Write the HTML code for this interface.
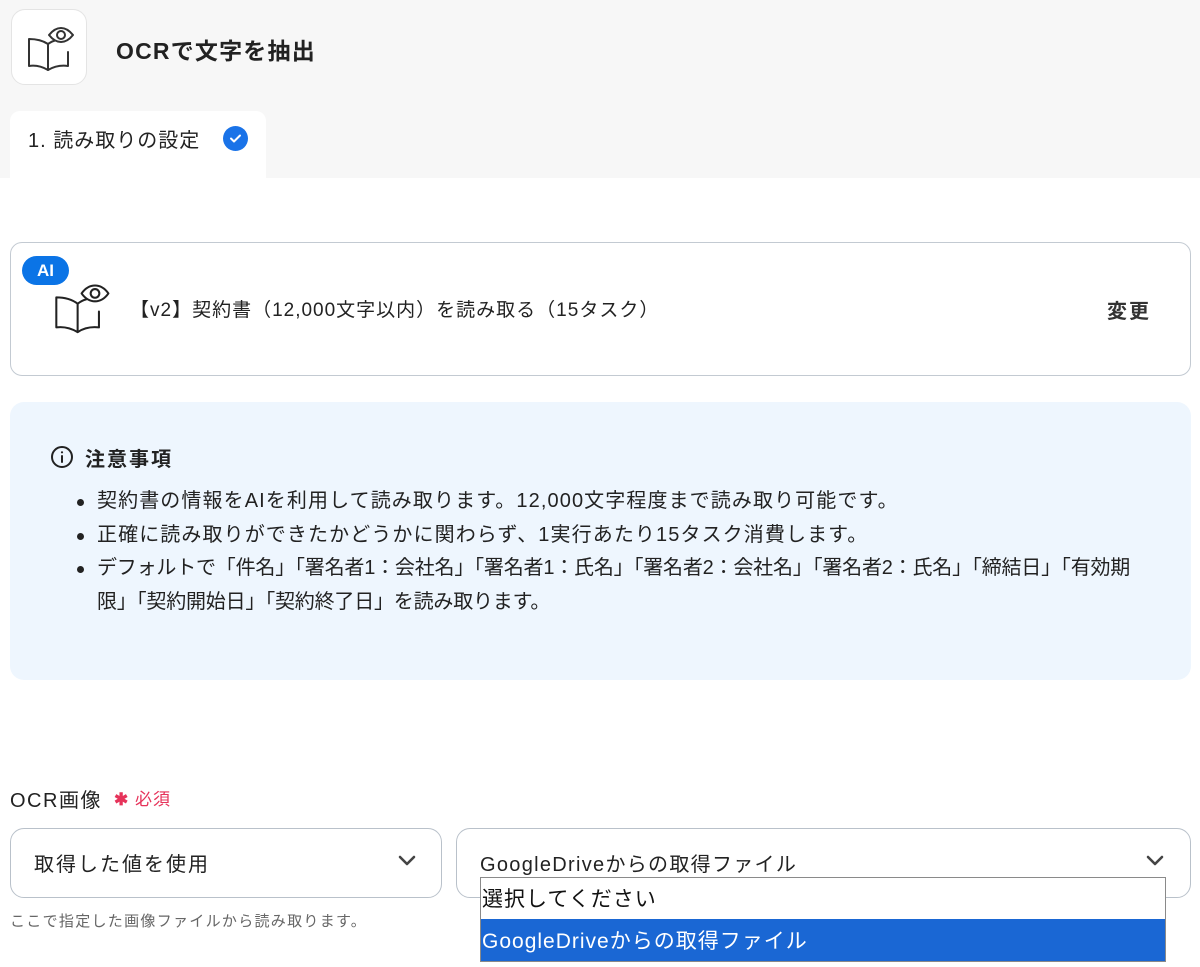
<!DOCTYPE html>
<html><head><meta charset="utf-8"><style>
*{box-sizing:border-box;margin:0;padding:0}
body{width:1200px;height:967px;background:#fff;font-family:"Liberation Sans","Noto Sans CJK JP",sans-serif;color:#222;position:relative;overflow:hidden}
.abs{position:absolute;white-space:nowrap}
.hdr{left:0;top:0;width:1200px;height:178px;background:#f7f7f7}
.ibox{left:11px;top:9px;width:76px;height:76px;background:#fff;border:1px solid #e4e4e4;border-radius:14px}
.title{left:116px;top:32px;font-size:23px;font-weight:bold;color:#222;letter-spacing:1.2px}
.tab{left:10px;top:111px;width:256px;height:67px;background:#fff;border-radius:10px 10px 0 0}
.tabt{left:28px;top:124px;font-size:20px;color:#222;letter-spacing:1px}
.chk{left:223px;top:126px;width:25px;height:25px;border-radius:50%;background:#1a73e8}
.card{left:10px;top:242px;width:1181px;height:134px;border:1px solid #c3cad2;border-radius:12px}
.ai{left:22px;top:256px;width:47px;height:29px;border-radius:15px;background:#0b74e6;color:#fff;font-weight:bold;font-size:17px;text-align:center;line-height:29px}
.ctext{left:130px;top:295px;font-size:19px;letter-spacing:1px}
.chg{left:1107px;top:295px;font-size:20px;font-weight:bold;color:#333;letter-spacing:2px}
.note{left:10px;top:402px;width:1181px;height:278px;background:#eef6fe;border-radius:14px}
.nh{left:85px;top:443px;font-size:20px;font-weight:bold;color:#222;letter-spacing:2px}
ul{position:absolute;left:97px;top:485px;width:1090px;font-size:20px;line-height:33.5px;list-style:none;letter-spacing:1.1px;white-space:nowrap}
li{position:relative}
li:before{content:"";position:absolute;left:-20px;top:14px;width:7px;height:7px;border-radius:50%;background:#222}
.lbl{left:10px;top:784px;font-size:20px;color:#222;letter-spacing:1.5px}
.req{left:114px;top:785px;font-size:17px;color:#e6335a;letter-spacing:1px}
.sel{top:828px;height:70px;border:1px solid #b9c1ca;border-radius:14px;background:#fff}
.st{font-size:20px;top:848px}
.help{left:10px;top:910px;font-size:15px;color:#666;letter-spacing:1.3px}
.dd{left:480px;top:877px;width:686px;height:85px;border:1px solid #8a8a8a;background:#fff}
.o1{left:481px;top:878px;width:684px;height:41px;font-size:21px;line-height:44px;padding-left:1px;color:#111;letter-spacing:1px}
.o2{left:481px;top:919px;width:684px;height:42px;background:#1a67d4;color:#fff;font-size:21px;line-height:46px;padding-left:1px;letter-spacing:1px}
</style></head><body>
<div class="abs hdr"></div>
<div class="abs ibox"><svg width="76" height="76" viewBox="0 0 76 76" style="position:absolute;left:-1px;top:-1px" fill="none" stroke="#333" stroke-width="2" stroke-linejoin="round" stroke-linecap="round">
<path d="M18 30v27c6-1 12 0 19 4V35c-6-4-12-5-19-5z"/><path d="M37 61c7-4 13-5 20-4V43"/><path d="M37 35c3-2 5-3 7-3.5"/>
<path d="M38 26c4-5 8-7 12-7s8 2 12 7c-4 5-8 7-12 7s-8-2-12-7z"/><circle cx="50" cy="26" r="4"/></svg></div>
<div class="abs title">OCRで文字を抽出</div>
<div class="abs tab"></div>
<div class="abs tabt">1. 読み取りの設定</div>
<div class="abs chk"><svg width="25" height="25" viewBox="0 0 25 25"><path d="M8 12.5l3 3 6-6" fill="none" stroke="#fff" stroke-width="2" stroke-linecap="round" stroke-linejoin="round"/></svg></div>

<div class="abs card"></div>
<div class="abs ai">AI</div>
<svg class="abs" style="left:50px;top:280px" width="60" height="60" viewBox="0 0 76 76" fill="none" stroke="#222" stroke-width="2.6" stroke-linejoin="round" stroke-linecap="round">
<path d="M8 22v38c8-1 17 0 27 6V30c-8-6-17-8-27-8z"/><path d="M35 66c9-6 18-7 27-6V40"/><path d="M35 30c4-3 8-5 11-5.5"/>
<path d="M40 17c5-7 11-10 17-10s12 3 17 10c-5 7-11 10-17 10s-12-3-17-10z"/><circle cx="57" cy="17" r="5.5"/></svg>
<div class="abs ctext">【v2】契約書（12,000文字以内）を読み取る（15タスク）</div>
<div class="abs chg">変更</div>

<div class="abs note"></div>
<svg class="abs" style="left:50px;top:445px" width="24" height="24" viewBox="0 0 24 24" fill="none" stroke="#222" stroke-width="2"><circle cx="12" cy="12" r="10"/><path d="M12 11v6" stroke-linecap="round"/><circle cx="12" cy="7.3" r="1.1" fill="#222" stroke="none"/></svg>
<div class="abs nh">注意事項</div>
<ul>
<li>契約書の情報をAIを利用して読み取ります。12,000文字程度まで読み取り可能です。</li>
<li>正確に読み取りができたかどうかに関わらず、1実行あたり15タスク消費します。</li>
<li style="letter-spacing:-0.2px">デフォルトで「件名」「署名者1：会社名」「署名者1：氏名」「署名者2：会社名」「署名者2：氏名」「締結日」「有効期<br>限」「契約開始日」「契約終了日」を読み取ります。</li>
</ul>

<div class="abs lbl">OCR画像</div>
<div class="abs req"><b>✱</b> 必須</div>
<div class="abs sel" style="left:10px;width:432px"></div>
<div class="abs st" style="left:34px;letter-spacing:2px">取得した値を使用</div>
<svg class="abs" style="left:397px;top:853px" width="20" height="16" viewBox="0 0 20 16"><path d="M3 4l7 7 7-7" fill="none" stroke="#444" stroke-width="2.6" stroke-linecap="round" stroke-linejoin="round"/></svg>
<div class="abs help">ここで指定した画像ファイルから読み取ります。</div>
<div class="abs sel" style="left:456px;width:735px"></div>
<div class="abs st" style="left:480px;letter-spacing:1.3px">GoogleDriveからの取得ファイル</div>
<svg class="abs" style="left:1145px;top:853px" width="20" height="16" viewBox="0 0 20 16"><path d="M3 4l7 7 7-7" fill="none" stroke="#444" stroke-width="2.6" stroke-linecap="round" stroke-linejoin="round"/></svg>
<div class="abs dd"></div>
<div class="abs o1">選択してください</div>
<div class="abs o2">GoogleDriveからの取得ファイル</div>
</body></html>
